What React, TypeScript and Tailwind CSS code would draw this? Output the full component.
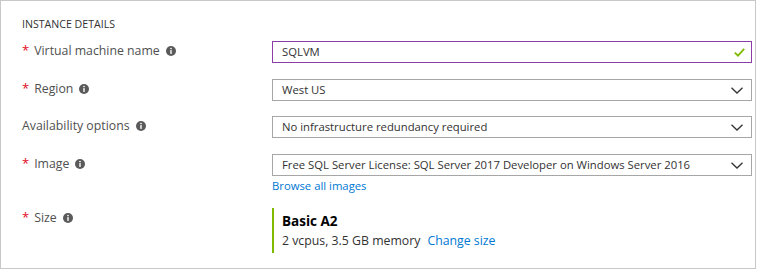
import { ReactNode } from "react";

function InfoIcon() {
  return (
    <svg width="10" height="10" viewBox="0 0 10 10" className="ml-[6px] shrink-0">
      <circle cx="5" cy="5" r="5" fill="#5a5a5a" />
      <rect x="4.3" y="4.1" width="1.4" height="3.8" fill="#fff" />
      <circle cx="5" cy="2.5" r="0.85" fill="#fff" />
    </svg>
  );
}

function Chevron() {
  return (
    <svg width="12" height="7" viewBox="0 0 12 7" className="shrink-0">
      <path d="M0.5 0.8 L6 6 L11.5 0.8" fill="none" stroke="#333" strokeWidth="1.3" />
    </svg>
  );
}

function Check() {
  return (
    <svg width="11" height="9" viewBox="0 0 11 9" className="shrink-0">
      <path d="M0.8 4.6 L4 7.6 L10.2 0.8" fill="none" stroke="#7fba00" strokeWidth="1.8" />
    </svg>
  );
}

function Label({ text, required }: { text: string; required?: boolean }) {
  return (
    <div className="flex h-[20px] w-[250px] items-center text-[12.3px] text-[#505050]">
      {required && <span className="mr-[5px] text-[13px] text-[#e00b1c]">*</span>}
      <span>{text}</span>
      <InfoIcon />
    </div>
  );
}

function Select({ value }: { value: string }) {
  return (
    <div className="flex h-[22px] w-[480px] items-center justify-between border border-[#a6a6a6] pl-[9px] pr-[8px] text-[11.3px] text-[#323232]">
      <span className="whitespace-nowrap">{value}</span>
      <Chevron />
    </div>
  );
}

function Row({ className, children }: { className: string; children: ReactNode }) {
  return <div className={`flex items-start ${className}`}>{children}</div>;
}

export default function App() {
  return (
    <div
      className="h-[270px] w-[758px] bg-white"
      style={{ fontFamily: '"Open Sans", "Liberation Sans", sans-serif' }}
    >
      <div className="box-border h-[269px] w-[756px] border border-[#c8c8c8] pl-[21px] pt-[15px]">
        <div className="h-[16px] text-[10.6px] leading-[16px] text-[#323232]">INSTANCE DETAILS</div>

        <Row className="mt-[9px]">
          <Label text="Virtual machine name" required />
          <div className="flex h-[22px] w-[480px] items-center justify-between border border-[#8e3ca8] pl-[9px] pr-[6px] text-[11.3px] text-[#323232]">
            <span>SQLVM</span>
            <Check />
          </div>
        </Row>

        <Row className="mt-[16px]">
          <Label text="Region" required />
          <Select value="West US" />
        </Row>

        <Row className="mt-[15px]">
          <Label text="Availability options" />
          <Select value="No infrastructure redundancy required" />
        </Row>

        <Row className="mt-[16px]">
          <Label text="Image" required />
          <div>
            <Select value="Free SQL Server License: SQL Server 2017 Developer on Windows Server 2016" />
            <a className="mt-[3px] block text-[11.3px] leading-[14px] text-[#0078d4]" href="#">
              Browse all images
            </a>
          </div>
        </Row>

        <Row className="mt-[15px]">
          <Label text="Size" required />
          <div className="h-[45px] border-l-2 border-[#7fba00] pl-[8px] pt-[3px] text-[12.3px] leading-[20px] text-[#323232]">
            <div className="text-[13.5px] font-bold text-black">Basic A2</div>
            <div>
              2 vcpus, 3.5 GB memory
              <a className="ml-[7px] text-[#0078d4]" href="#">
                Change size
              </a>
            </div>
          </div>
        </Row>
      </div>
    </div>
  );
}
